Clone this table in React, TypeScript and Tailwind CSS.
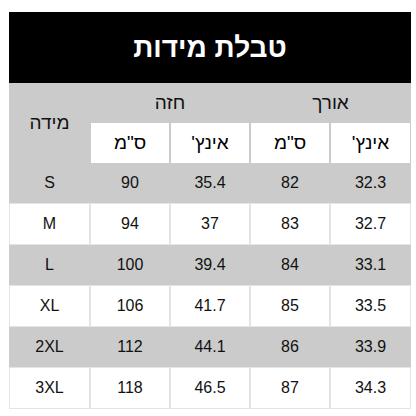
const rows = [
  { size: "S", chestCm: "90", chestIn: "35.4", lenCm: "82", lenIn: "32.3" },
  { size: "M", chestCm: "94", chestIn: "37", lenCm: "83", lenIn: "32.7" },
  { size: "L", chestCm: "100", chestIn: "39.4", lenCm: "84", lenIn: "33.1" },
  { size: "XL", chestCm: "106", chestIn: "41.7", lenCm: "85", lenIn: "33.5" },
  { size: "2XL", chestCm: "112", chestIn: "44.1", lenCm: "86", lenIn: "33.9" },
  { size: "3XL", chestCm: "118", chestIn: "46.5", lenCm: "87", lenIn: "34.3" },
];

const cols = "grid grid-cols-[79px_78px_78px_78px_79px] gap-x-[2px] px-[1px]";

export default function App() {
  return (
    <div
      className="min-h-screen bg-white pt-[12px]"
      style={{ fontFamily: '"Liberation Sans", Arial, sans-serif' }}
    >
      <div className="ml-[9px] w-[402px]">
        {/* Title */}
        <div
          dir="rtl"
          className="flex h-[71px] items-center justify-center bg-black text-[28px] font-bold text-white"
        >
          טבלת מידות
        </div>

        {/* Header */}
        <div className={`${cols} bg-[#cbcbcb]`}>
          <div dir="rtl" className="row-span-2 flex items-center justify-center text-[19px] text-[#111]">
            מידה
          </div>
          <div dir="rtl" className="col-span-2 flex h-[40px] items-center justify-center text-[19px] text-[#111]">
            חזה
          </div>
          <div dir="rtl" className="col-span-2 flex h-[40px] items-center justify-center text-[19px] text-[#111]">
            אורך
          </div>
          {["ס\"מ", "אינץ'", "ס\"מ", "אינץ'"].map((t, i) => (
            <div
              key={i}
              dir="rtl"
              className="flex h-[40px] items-center justify-center bg-white text-[19px] text-black"
            >
              {t}
            </div>
          ))}
        </div>

        {/* Body */}
        {rows.map((r, i) => {
          const gray = i % 2 === 0;
          return (
            <div
              key={r.size}
              className={`${cols} border-b border-[#e4e4e4] ${gray ? "bg-[#cbcbcb]" : "bg-[#e4e4e4]"}`}
            >
              {[r.size, r.chestCm, r.chestIn, r.lenCm, r.lenIn].map((v, j) => (
                <div
                  key={j}
                  className={`flex h-[40px] items-center justify-center text-[16px] text-[#111] ${gray ? "bg-[#cbcbcb]" : "bg-white"}`}
                >
                  {v}
                </div>
              ))}
            </div>
          );
        })}
      </div>
    </div>
  );
}
